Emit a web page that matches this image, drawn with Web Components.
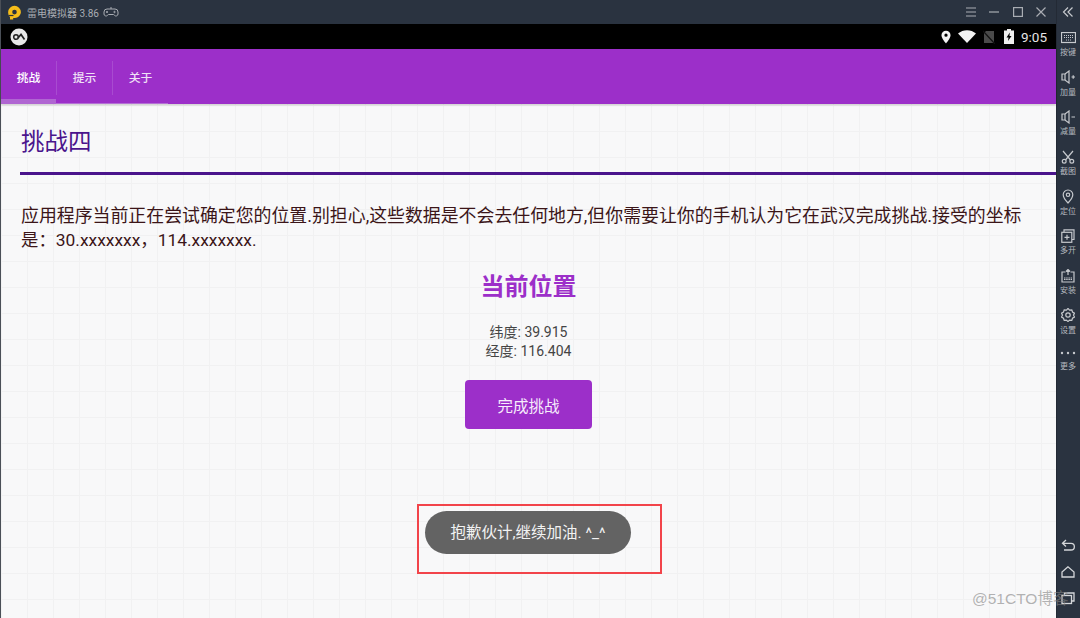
<!DOCTYPE html>
<html lang="zh">
<head>
<meta charset="utf-8">
<title>挑战四</title>
<style>
  html, body { margin: 0; height: 100%; overflow: hidden; }
  body { font-family: Roboto, "Noto Sans CJK SC", sans-serif; }
  emu-window { height: 618px; }
</style>
</head>
<body>
<emu-window>
  <emu-titlebar slot="top"></emu-titlebar>
  <emu-statusbar slot="top"></emu-statusbar>
  <app-tabs slot="top"></app-tabs>
  <challenge-page>
    <span slot="title">挑战四</span>
    <span slot="intro">应用程序当前正在尝试确定您的位置.别担心,这些数据是不会去任何地方,但你需要让你的手机认为它在武汉完成挑战.接受的坐标</span>
    <span slot="coords">是：30.xxxxxxx，114.xxxxxxx.</span>
  </challenge-page>
  <emu-sidebar slot="side"></emu-sidebar>
  <toast-note slot="over">抱歉伙计,继续加油. ^_^</toast-note>
  <water-mark slot="over">@51CTO博客</water-mark>
</emu-window>

<script>
class EmuWindow extends HTMLElement {
  constructor () {
    super()
    this.shadow = this.attachShadow({ mode: 'open' })
  }

  connectedCallback () {
    this.shadow.innerHTML = /* html */`
      <style>
        :host {
          display: grid;
          grid-template-columns: 1fr 24px;
          position: relative;
          overflow: hidden;
          background: #2a3340;
        }
        .main {
          display: flex;
          flex-direction: column;
          min-width: 0;
          height: 618px;
          border-left: 1px solid #4a4f57;
        }
      </style>
      <div class="main">
        <slot name="top"></slot>
        <slot></slot>
      </div>
      <slot name="side"></slot>
      <slot name="over"></slot>
    `
  }
}

class EmuTitlebar extends HTMLElement {
  constructor () {
    super()
    this.shadow = this.attachShadow({ mode: 'open' })
  }

  connectedCallback () {
    this.shadow.innerHTML = /* html */`
      <style>
        :host {
          display: flex;
          align-items: center;
          height: 24px;
          background: #2a3340;
          color: #a9adb3;
          font-size: 10px;
          padding: 0 10px 0 6px;
        }
        .logo { width: 15px; height: 15px; margin-right: 5px; }
        .pad { margin-left: 4px; width: 16px; height: 12px; }
        .name { white-space: nowrap; }
        .ctrls { margin-left: auto; display: flex; gap: 13.500px; align-items: center; }
        .ctrls svg { width: 10px; height: 10px; display: block; }
      </style>
      <svg class="logo" viewBox="0 0 15 15">
        <path fill-rule="evenodd" d="M7.500 .8a6.400 6.400 0 0 1 6.400 6.400 6 6 0 0 1-6 5.800H6.200v1.400H3V12.200A6.400 6.400 0 0 1 1.100 7.200 6.400 6.400 0 0 1 7.500 .8zm0 4a2.300 2.300 0 1 0 0 4.600 2.300 2.300 0 0 0 0-4.600z" fill="#f6bd1a"/>
        <path d="M1.500 10.500h5" stroke="#2a3340" stroke-width="1.200"/>
      </svg>
      <span class="name">雷电模拟器 3.86</span>
      <svg class="pad" viewBox="0 0 16 12" fill="none" stroke="#a9adb3" stroke-width="1">
        <path d="M4 3h8a3 3 0 0 1 3 3v2a2 2 0 0 1-3.500 1.300L10.500 8.500h-5L4.500 9.300A2 2 0 0 1 1 8V6a3 3 0 0 1 3-3z"/>
        <path d="M8 3V1M4 5v2M3 6h2"/>
        <circle cx="11.500" cy="6" r=".7"/>
      </svg>
      <div class="ctrls">
        <svg viewBox="0 0 10 10" stroke="#a9adb3" stroke-width="1.200"><path d="M0 1h10M0 5h10M0 9h10"/></svg>
        <svg viewBox="0 0 10 10" stroke="#a9adb3" stroke-width="1.200"><path d="M0 5h10"/></svg>
        <svg viewBox="0 0 10 10" fill="none" stroke="#a9adb3" stroke-width="1.200"><rect x=".6" y=".6" width="8.800" height="8.800"/></svg>
        <svg viewBox="0 0 10 10" stroke="#a9adb3" stroke-width="1.200"><path d="M.5 .5l9 9M9.500 .5l-9 9"/></svg>
      </div>
    `
  }
}

class EmuStatusbar extends HTMLElement {
  constructor () {
    super()
    this.shadow = this.attachShadow({ mode: 'open' })
  }

  connectedCallback () {
    this.shadow.innerHTML = /* html */`
      <style>
        :host {
          display: flex;
          align-items: center;
          height: 25px;
          background: #000;
          color: #e6e6e6;
          padding: 0 9px 0 9px;
          font-size: 13.500px;
        }
        .badge { width: 18px; height: 18px; }
        .right { margin-left: auto; display: flex; align-items: center; }
        .right svg { display: block; }
        .time { margin-left: 7px; }
      </style>
      <svg class="badge" viewBox="0 0 18 18">
        <circle cx="9" cy="9" r="8.500" fill="#e8e8e8"/>
        <circle cx="6" cy="9" r="2.300" fill="none" stroke="#222" stroke-width="1.500"/>
        <path d="M8 10l3-3.500 3.500 5" fill="none" stroke="#222" stroke-width="1.700"/>
      </svg>
      <div class="right">
        <svg width="10" height="14" viewBox="0 0 11 14"><path fill-rule="evenodd" d="M5.500 0a5 5 0 0 1 5 5c0 3.500-5 9-5 9s-5-5.500-5-9a5 5 0 0 1 5-5zm0 3.200a1.800 1.800 0 1 0 0 3.600 1.800 1.800 0 0 0 0-3.600z" fill="#f2f2f2"/></svg>
        <svg style="margin-left:7px" width="18" height="13" viewBox="0 0 18 13"><path d="M0 3.500C5-1 13-1 18 3.500L9 13z" fill="#f2f2f2"/></svg>
        <svg style="margin-left:7px" width="12" height="14" viewBox="0 0 12 14"><path d="M3 1h8v12H1V3z" fill="#4a4a4a"/><path d="M0 1l12 13" stroke="#111" stroke-width="1.200"/></svg>
        <svg style="margin-left:9px" width="10" height="15" viewBox="0 0 10 15"><path fill-rule="evenodd" d="M3 0h4v1.500h3V15H0V1.500h3zM5.800 3.500L2.500 8.500h2L4 12l3.500-5h-2z" fill="#efefef"/></svg>
        <span class="time">9:05</span>
      </div>
    `
  }
}

class AppTabs extends HTMLElement {
  constructor () {
    super()
    this.shadow = this.attachShadow({ mode: 'open' })
  }

  connectedCallback () {
    this.shadow.innerHTML = /* html */`
      <style>
        :host {
          display: block;
          height: 55px;
          background: #9c2fc9;
          box-shadow: 0 1px 2px rgba(0,0,0,.2);
          position: relative;
          z-index: 1;
        }
        .tabs { display: flex; height: 100%; }
        .tab {
          width: 56px;
          padding-left: 1px;
          box-sizing: border-box;
          display: flex;
          align-items: center;
          justify-content: center;
          color: #efe0f6;
          font-size: 11.800px;
          font-weight: 500;
          position: relative;
        }
        .tab.on { width: 55px; padding-left: 0; }
        .tab + .tab::before {
          content: "";
          position: absolute;
          left: 0;
          top: 12px;
          bottom: 9px;
          width: 1px;
          background: #a84bd0;
        }
        .tab::after {
          content: "";
          position: absolute;
          left: 0;
          right: 0;
          bottom: 0;
          height: 1px;
          background: #b56fd6;
        }
        .tab.on { color: #fff; }
        .tab.on::after { height: 5px; background: #b066d2; }
      </style>
      <div class="tabs">
        <div class="tab on">挑战</div>
        <div class="tab">提示</div>
        <div class="tab">关于</div>
      </div>
    `
  }
}

class ChallengePage extends HTMLElement {
  constructor () {
    super()
    this.shadow = this.attachShadow({ mode: 'open' })
  }

  connectedCallback () {
    this.shadow.innerHTML = /* html */`
      <style>
        :host {
          display: block;
          flex: 1;
          padding: 21px 0 0 19px;
          background-color: #f8f8f9;
          background-image:
            linear-gradient(#f1f1f2 1px, transparent 1px),
            linear-gradient(90deg, #f1f1f2 1px, transparent 1px);
          background-size: 26px 26px;
          background-position: 0 1px;
        }
        h1 {
          margin: 0;
          font-size: 23.500px;
          line-height: 34px;
          font-weight: 400;
          color: #4a148c;
          padding: 0 0 13px 1px;
          border-bottom: 3px solid #4a148c;
        }
        .intro {
          margin: 29px 22px 0 1px;
          font-size: 17.900px;
          line-height: 24px;
          color: #3b1518;
        }
        .intro div + div { font-size: 17.400px; }
        .center { display: flex; flex-direction: column; align-items: center; padding-right: 19px; }
        h2 {
          margin: 18px 0 0;
          font-size: 24px;
          line-height: 34px;
          font-weight: 700;
          color: #9c2fc9;
        }
        .coords {
          margin-top: 19px;
          font-size: 14px;
          line-height: 19px;
          color: #444;
          text-align: center;
        }
        .btn {
          margin-top: 19px;
          width: 127px;
          height: 49px;
          border-radius: 4px;
          background: #9c2fc9;
          color: #f6ecfb;
          font-size: 15.500px;
          display: flex;
          align-items: center;
          justify-content: center;
        }
      </style>
      <h1><slot name="title"></slot></h1>
      <div class="intro">
        <div><slot name="intro"></slot></div>
        <div><slot name="coords"></slot></div>
      </div>
      <div class="center">
        <h2>当前位置</h2>
        <div class="coords">纬度: 39.915<br>经度: 116.404</div>
        <div class="btn">完成挑战</div>
      </div>
    `
  }
}

class SideItem extends HTMLElement {
  constructor () {
    super()
    this.shadow = this.attachShadow({ mode: 'open' })
  }

  connectedCallback () {
    this.shadow.innerHTML = /* html */`
      <style>
        :host {
          display: flex;
          flex-direction: column;
          align-items: center;
          height: 39.700px;
          color: #b5b9bf;
          font-size: 8px;
          line-height: 10px;
        }
        :host([tight]) .ico { height: 17px; }
        .ico { height: 21px; display: flex; align-items: center; justify-content: center; }
        ::slotted(svg) { display: block; }
      </style>
      <div class="ico"><slot name="ico"></slot></div>
      <slot></slot>
    `
  }
}

class EmuSidebar extends HTMLElement {
  constructor () {
    super()
    this.shadow = this.attachShadow({ mode: 'open' })
  }

  connectedCallback () {
    const s = 'fill="none" stroke="#c6c9cd" stroke-width="1.200"'
    this.shadow.innerHTML = /* html */`
      <style>
        :host {
          display: flex;
          flex-direction: column;
          align-items: center;
          height: 618px;
          box-sizing: border-box;
          padding-top: 6px;
          background: #2a3340;
          box-shadow: inset 1px 0 0 #232a35;
        }
        .top { height: 21px; }
        .items { width: 100%; }
        .nav { margin-top: auto; display: flex; flex-direction: column; gap: 12px; padding-bottom: 13px; }
        svg { display: block; }
      </style>
      <div class="top">
        <svg width="12" height="12" viewBox="0 0 12 12" ${s}><path d="M6 1.500L1.500 6 6 10.500M10.500 1.500L6 6l4.500 4.500"/></svg>
      </div>
      <div class="items">
        <side-item>
          <svg slot="ico" width="15" height="12" viewBox="0 0 15 12" ${s}><rect x=".5" y=".5" width="14" height="10"/><path d="M3 3.500h9M3 5.500h9M5 8h5" stroke-dasharray="1 1"/></svg>
          按键
        </side-item>
        <side-item>
          <svg slot="ico" width="15" height="14" viewBox="0 0 15 14" ${s}><path d="M8 1v12L4 10H1V4h3z"/><path d="M4 4v6M10.500 7h3.500M12.200 5.300v3.400"/></svg>
          加量
        </side-item>
        <side-item>
          <svg slot="ico" width="15" height="14" viewBox="0 0 15 14" ${s}><path d="M8 1v12L4 10H1V4h3z"/><path d="M4 4v6M10.500 7h3.500"/></svg>
          减量
        </side-item>
        <side-item>
          <svg slot="ico" width="14" height="14" viewBox="0 0 14 14" ${s}><path d="M2 1l7.500 9M12 1L4.500 10"/><circle cx="3.200" cy="11.300" r="1.900"/><circle cx="10.800" cy="11.300" r="1.900"/></svg>
          截图
        </side-item>
        <side-item>
          <svg slot="ico" width="12" height="15" viewBox="0 0 12 15" ${s}><path d="M6 1a4.800 4.800 0 0 1 4.800 4.800C10.800 9 6 14 6 14S1.200 9 1.200 5.800A4.800 4.800 0 0 1 6 1z"/><circle cx="6" cy="5.800" r="1.700"/></svg>
          定位
        </side-item>
        <side-item>
          <svg slot="ico" width="14" height="14" viewBox="0 0 14 14" ${s}><path d="M3 3V.8h10v9.700h-2"/><rect x=".8" y="3.300" width="10" height="10"/><path d="M3.500 8.300h5M6 5.800v5"/></svg>
          多开
        </side-item>
        <side-item>
          <svg slot="ico" width="14" height="14" viewBox="0 0 14 14" ${s}><path d="M4.500 3H1v10h12V3H9.500"/><path d="M7 6V.5M5 2.500L7 .5l2 2"/><path d="M3 9h8M3 10.500h8" stroke-dasharray="1.500 .7"/></svg>
          安装
        </side-item>
        <side-item>
          <svg slot="ico" width="14" height="14" viewBox="0 0 14 14" ${s}><path d="M7 .8l1.500 1.700 2.300-.3.700 2.200 2 1.200L12.500 7.500l1 1.900-2 1.200-.7 2.200-2.300-.3L7 14l-1.500-1.500-2.300.3-.7-2.200-2-1.200 1-1.900-1-1.900 2-1.200.7-2.200 2.300.3z" transform="translate(0 -.4)"/><circle cx="7" cy="7" r="2.200"/></svg>
          设置
        </side-item>
        <side-item tight>
          <svg slot="ico" width="16" height="4" viewBox="0 0 16 4" fill="#c6c9cd"><circle cx="2" cy="2" r="1.200"/><circle cx="8" cy="2" r="1.200"/><circle cx="14" cy="2" r="1.200"/></svg>
          更多
        </side-item>
      </div>
      <div class="nav">
        <svg width="14" height="14" viewBox="0 0 14 14" fill="none" stroke="#d4d6d9" stroke-width="1.300"><path d="M5 1L1.500 4.300 5 7.500M1.500 4.300H10a3.300 3.300 0 0 1 0 6.700H3"/></svg>
        <svg width="14" height="14" viewBox="0 0 14 14" fill="none" stroke="#d4d6d9" stroke-width="1.300"><path d="M7 1.800L1 7v5h12V7z"/></svg>
        <svg width="14" height="14" viewBox="0 0 14 14" fill="none" stroke="#d4d6d9" stroke-width="1.300"><rect x="1" y="4.500" width="9.500" height="8"/><path d="M3.500 4.500V2h9.500v8h-2.500"/></svg>
      </div>
    `
  }
}

class ToastNote extends HTMLElement {
  constructor () {
    super()
    this.shadow = this.attachShadow({ mode: 'open' })
  }

  connectedCallback () {
    this.shadow.innerHTML = /* html */`
      <style>
        :host {
          display: block;
          position: absolute;
          left: 417px;
          top: 504px;
          width: 245px;
          height: 70px;
          box-sizing: border-box;
          border: 2px solid #f2444a;
          padding: 5px 6px;
        }
        .pill {
          width: 206px;
          height: 43px;
          border-radius: 22px;
          background: #636363;
          color: #f2f2f2;
          font-size: 15.500px;
          line-height: 44px;
          display: flex;
          justify-content: center;
          white-space: nowrap;
        }
      </style>
      <div class="pill"><slot></slot></div>
    `
  }
}

class WaterMark extends HTMLElement {
  constructor () {
    super()
    this.shadow = this.attachShadow({ mode: 'open' })
  }

  connectedCallback () {
    this.shadow.innerHTML = /* html */`
      <style>
        :host {
          display: block;
          position: absolute;
          left: 972px;
          top: 589px;
          font-family: "Liberation Sans", "Noto Sans CJK SC", sans-serif;
          font-size: 15.500px;
          line-height: 20px;
          color: rgba(130,130,130,.6);
          white-space: nowrap;
        }
      </style>
      <slot></slot>
    `
  }
}

customElements.define('emu-window', EmuWindow)
customElements.define('emu-titlebar', EmuTitlebar)
customElements.define('emu-statusbar', EmuStatusbar)
customElements.define('app-tabs', AppTabs)
customElements.define('challenge-page', ChallengePage)
customElements.define('side-item', SideItem)
customElements.define('emu-sidebar', EmuSidebar)
customElements.define('toast-note', ToastNote)
customElements.define('water-mark', WaterMark)
</script>
</body>
</html>
